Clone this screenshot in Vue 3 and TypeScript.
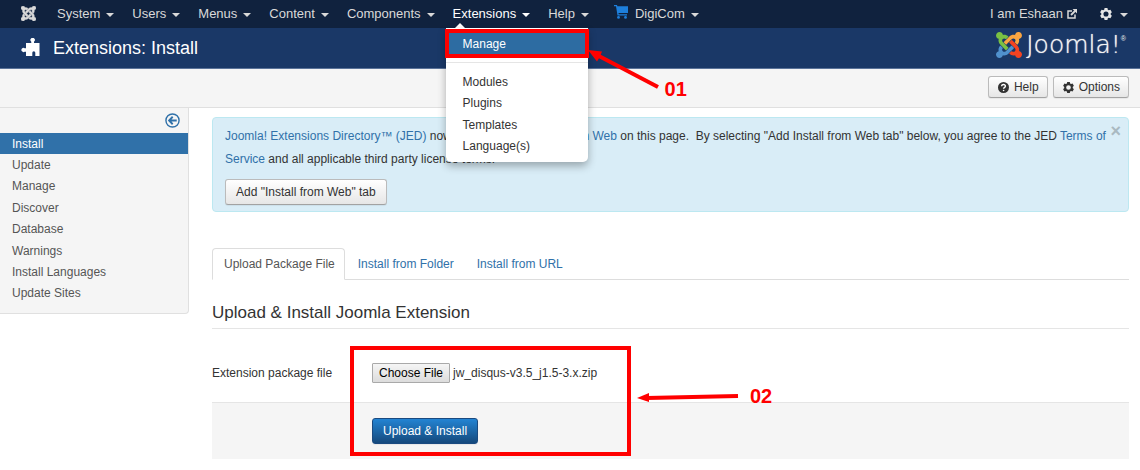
<script setup lang="ts">
import { onMounted, ref } from 'vue'

interface MenuEntry {
  label: string
  open?: boolean
}

const menus: MenuEntry[] = [
  { label: 'System' },
  { label: 'Users' },
  { label: 'Menus' },
  { label: 'Content' },
  { label: 'Components' },
  { label: 'Extensions', open: true },
  { label: 'Help' },
]
const extensionLinks: string[] = ['Modules', 'Plugins', 'Templates', 'Language(s)']
const sections: string[] = [
  'Install',
  'Update',
  'Manage',
  'Discover',
  'Database',
  'Warnings',
  'Install Languages',
  'Update Sites',
]
const tabs: string[] = ['Upload Package File', 'Install from Folder', 'Install from URL']

const logoParts: { name: string; d: string }[] = [
  {
    name: 'green',
    d: 'M.6 92.1C.6 58.8 27.4 32 60.4 32c30 0 54.5 21.9 59.2 50.2 32.6-7.6 67.1.6 96.5 30l-44.3 44.3c-20.5-20.5-42.6-16.3-55.4-3.5-14.3 14.3-14.3 37.9 0 52.2l99.5 99.5-44 44.3c-87.7-87.2-49.7-49.7-99.8-99.7-26.8-26.5-35-64.8-24.8-98.9C20.4 144.6.6 120.7.6 92.1z',
  },
  {
    name: 'orange',
    d: 'M130.1 208.5l44.3 44.3c10-10 89.7-89.7 99.7-99.8 14.3-14.3 37.6-14.3 51.9 0 12.8 12.8 17 35-3.5 55.4l44 44.3c31.2-31.2 38.5-67.6 28.9-101.2 29.2-4.1 51.9-29.2 51.9-59.5 0-33.2-26.8-60.1-59.8-60.1-30.3 0-55.4 22.5-59.5 51.6-33.8-9.9-71.7-1.5-98.3 25.1-18.3 19.1-71.1 71.5-99.6 99.9z',
  },
  {
    name: 'red',
    d: 'M396.4 360.7c8.2-32.7-.9-68.5-26.3-93.9-11.8-12.2 5 4.7-99.5-99.7l-44.3 44.3 99.7 99.7c14.3 14.3 14.3 37.6 0 51.9-12.8 12.8-35 17-55.4-3.5l-44 44.3c27.6 30.2 68 38.8 102.7 28 5.5 27.4 29.7 48.1 58.9 48.1 33 0 59.8-26.8 59.8-60.1 0-30.2-22.5-55-51.6-59.1z',
  },
  {
    name: 'blue',
    d: 'M312.1 307.6l-44-44.3c-87 86.4-50.4 50.4-99.7 99.8-14.3 14.3-37.6 14.3-51.9 0-13.1-13.4-16.9-35.3 3.2-55.4l-44-44.3c-30.2 30.2-38 65.2-29.5 98.3-26.7 6-46.2 29.9-46.2 58.2C0 453.2 26.8 480 59.8 480c28.6 0 52.5-19.8 58.6-46.7 32.7 8.2 68.5-.6 94.2-26 32.1-32 12.2-12.4 99.5-99.7z',
  },
]

const gearPath =
  'M6.1 0h3.8l.5 2.2 1.3.8 2.2-.7 1.9 3.3-1.6 1.6v1.6l1.6 1.6-1.9 3.3-2.2-.7-1.3.8-.5 2.2H6.1l-.5-2.2-1.3-.8-2.2.7L.2 10.4l1.6-1.6V7.2L.2 5.6l1.9-3.3 2.2.7 1.3-.8zM8 4.6a3.4 3.4 0 1 0 0 6.8 3.4 3.4 0 0 0 0-6.8z'

const packageInput = ref<HTMLInputElement | null>(null)

onMounted(() => {
  const transfer = new DataTransfer()
  transfer.items.add(new File([''], 'jw_disqus-v3.5_j1.5-3.x.zip'))
  if (packageInput.value) packageInput.value.files = transfer.files
})
</script>

<template>
  <div class="page">
    <nav class="topbar" aria-label="Main menu">
      <a class="brand" href="#" aria-label="Home">
        <svg viewBox="0 32 448 448" width="15" height="15">
          <path v-for="part in logoParts" :key="part.name" :d="part.d" fill="#d9d9d9" stroke="#d9d9d9" stroke-width="12" />
        </svg>
      </a>
      <ul class="menus">
        <li v-for="menu in menus" :key="menu.label" class="menu">
          <a class="menu-link" :class="{ open: menu.open }" href="#">{{ menu.label }}<span class="caret"></span></a>
          <div v-if="menu.open" class="dropdown">
            <a class="drop-link selected" href="#">Manage</a>
            <hr />
            <div class="drop-list">
              <a v-for="link in extensionLinks" :key="link" class="drop-link" href="#">{{ link }}</a>
            </div>
            <div class="mark mark-menu"></div>
            <div class="pointer pointer-menu">
              <svg width="72" height="50" viewBox="0 0 72 50">
                <path d="M9 6 70 38" stroke="#f00" stroke-width="4" />
                <path d="M0 1 14 2.500 12 7.500 9 12.500z" fill="#f00" />
              </svg>
              <span>01</span>
            </div>
          </div>
        </li>
        <li class="menu">
          <a class="menu-link" href="#">
            <svg class="cart" viewBox="0 0 15 14" width="15" height="14" fill="#1d7fdc">
              <path d="M0 0h3l.4 1.300H14V8H4.500l.2 1.200H13v1.200H3.500L2 1.200H0z" />
              <circle cx="4.500" cy="12.400" r="1.400" />
              <circle cx="11.500" cy="12.400" r="1.400" />
            </svg>DigiCom<span class="caret"></span>
          </a>
        </li>
      </ul>
      <div class="account">
        <a class="menu-link" href="#">I am Eshaan
          <svg class="external" viewBox="0 0 10 10" width="10" height="10" fill="none" stroke="#d9d9d9">
            <path d="M5 2H1v7h7V5.500" stroke-width="1.500" />
            <path d="M4 6 8.500 1.500" stroke-width="1.800" />
            <path d="M5.500 0H10v4.500z" fill="#d9d9d9" stroke="none" />
          </svg>
        </a>
        <a class="menu-link gear" href="#" aria-label="Settings">
          <svg viewBox="0 0 16 16" width="12" height="12"><path :d="gearPath" fill="#e6e6e6" fill-rule="evenodd" /></svg>
          <span class="caret"></span>
        </a>
      </div>
    </nav>

    <header class="header">
      <svg class="puzzle" viewBox="0 0 19 19" width="19" height="19" fill="#fff">
        <path d="M5 5h5.300V3.700a2.200 2.200 0 1 1 2.700 0V5h5.500v13h-4.200v-3.300a1.500 1.500 0 1 0-3 0V18H5v-4.300H3.700a2.100 2.100 0 1 1 0-3.500H5z" />
      </svg>
      <h1>Extensions: Install</h1>
      <a class="logo" href="#">
        <svg viewBox="0 32 448 448" width="26" height="26">
          <path v-for="part in logoParts" :key="part.name" :d="part.d" :class="part.name" />
        </svg>
        <span class="wordmark">Joomla!</span><sup>®</sup>
      </a>
    </header>

    <div class="toolbar">
      <button type="button" class="btn small">
        <svg viewBox="0 0 12 12" width="11" height="11">
          <circle cx="6" cy="6" r="6" fill="#333" />
          <path d="M4 4.600C4 2 8.200 2.200 8.100 4.500 8 5.900 6.100 5.800 6.100 7.400" fill="none" stroke="#fff" stroke-width="1.500" />
          <circle cx="6.100" cy="9.300" r=".9" fill="#fff" />
        </svg>Help
      </button>
      <button type="button" class="btn small">
        <svg viewBox="0 0 16 16" width="11" height="11"><path :d="gearPath" fill="#333" fill-rule="evenodd" /></svg>Options
      </button>
    </div>

    <div class="columns">
      <aside class="sidebar">
        <button type="button" class="collapse" aria-label="Hide the sidebar">
          <svg viewBox="0 0 16 16" width="15" height="15" fill="none" stroke="#3071a9">
            <circle cx="8" cy="8" r="7" stroke-width="1.500" />
            <path d="M12.500 8H5M8.200 4 4.400 8l3.800 4" stroke-width="2" />
          </svg>
        </button>
        <nav class="sections" aria-label="Extension manager">
          <a v-for="(section, i) in sections" :key="section" :class="{ current: i === 0 }" href="#">{{ section }}</a>
        </nav>
      </aside>

      <main class="content">
        <section class="alert">
          <button type="button" class="close" aria-label="Close">×</button>
          <p>
            <a href="#">Joomla! Extensions Directory™ (JED)</a> now available with <a href="#">Install from Web</a> on this page.&nbsp; By selecting "Add Install from Web tab" below, you agree to the JED <a href="#">Terms of Service</a> and all applicable third party license terms.
          </p>
          <button type="button" class="btn">Add "Install from Web" tab</button>
        </section>

        <nav class="tabs" aria-label="Install methods">
          <a v-for="(tab, i) in tabs" :key="tab" :class="{ current: i === 0 }" href="#">{{ tab }}</a>
        </nav>

        <form class="upload" @submit.prevent>
          <h2>Upload &amp; Install Joomla Extension</h2>
          <div class="field">
            <label for="package">Extension package file</label>
            <input id="package" ref="packageInput" type="file" />
          </div>
          <div class="actions">
            <button type="submit" class="btn primary">Upload &amp; Install</button>
          </div>
          <div class="mark mark-form"></div>
          <div class="pointer pointer-form">
            <svg width="102" height="12" viewBox="0 0 102 12">
              <path d="M10 8 101 6" stroke="#f00" stroke-width="4" />
              <path d="M0 8 12 3v9z" fill="#f00" />
            </svg>
            <span>02</span>
          </div>
        </form>
      </main>
    </div>
  </div>
</template>

<style>
body {
  margin: 0;
  background: #fff;
}
</style>

<style scoped>
.page {
  font: 12px/18px "Liberation Sans", Arial, sans-serif;
  color: #333;
}
* {
  box-sizing: border-box;
}
a {
  color: #3071a9;
  text-decoration: none;
}
svg {
  flex: none;
  display: block;
}
button,
input {
  font: inherit;
}

.topbar {
  display: flex;
  align-items: center;
  height: 28px;
  padding: 0 12px 0 21px;
  background: #10223e;
  font-size: 13px;
}
.brand {
  width: 36px;
  padding-bottom: 2px;
}
.menus {
  display: flex;
  gap: 18px;
  margin: 0;
  padding: 0;
  list-style: none;
}
.menu {
  position: relative;
}
.menu-link {
  display: flex;
  align-items: center;
  height: 28px;
  color: #d9d9d9;
  white-space: nowrap;
}
.menu-link.open {
  color: #fff;
}
.menu-link.open::after {
  content: "";
  position: absolute;
  left: 2px;
  bottom: 0;
  border: 5px solid transparent;
  border-top: 0;
  border-bottom-color: #fff;
}
.caret {
  margin: 2px 0 0 6px;
  border: 4px solid transparent;
  border-top-color: currentColor;
  border-bottom: 0;
  width: 7px;
}
.gear .caret {
  margin-left: 8px;
}
.cart {
  margin: 0 6px 4px 7px;
}
.account {
  display: flex;
  gap: 23px;
  margin-left: auto;
}
.external {
  margin-left: 4px;
}

.dropdown {
  position: absolute;
  z-index: 5;
  top: 28px;
  left: -7px;
  width: 142px;
  padding: 5px 0;
  background: #fff;
  border-radius: 0 0 5px 5px;
  box-shadow: 0 4px 9px rgba(0, 0, 0, 0.3);
  font-size: 12px;
}
.drop-link {
  display: flex;
  align-items: center;
  padding: 0 17px;
  color: #333;
}
.drop-link.selected {
  height: 22px;
  background: #2d6ca2;
  color: #fff;
}
.dropdown hr {
  margin: 7px 0 8px;
  border: 0;
  border-top: 1px solid #e5e5e5;
}
.drop-list,
.sections {
  display: grid;
  grid-auto-rows: 1fr;
}
.drop-list {
  min-height: 86px;
}

.mark {
  position: absolute;
  border: 4px solid #f00;
  pointer-events: none;
}
.mark-menu {
  top: 1px;
  left: -1px;
  right: -1px;
  height: 29px;
}
.pointer {
  position: absolute;
  display: flex;
  color: #f00;
  font-size: 20px;
  line-height: 20px;
  font-weight: bold;
}
.pointer-menu {
  top: 21px;
  left: 142px;
  align-items: flex-end;
  gap: 5px;
}

.header {
  display: flex;
  align-items: center;
  height: 41px;
  padding: 0 14px 0 21px;
  background: #1a3867;
  border-bottom: 1px solid #5b7399;
  color: #fff;
}
.puzzle {
  margin: 0 13px 2px 0;
}
.header h1 {
  margin: 0;
  font-size: 18px;
  line-height: 24px;
  font-weight: normal;
}
.logo {
  display: flex;
  align-items: center;
  margin-left: auto;
  padding-bottom: 7px;
  color: #f2f2f2;
}
.wordmark {
  margin-left: 4px;
  font: 200 25px/26px "DejaVu Sans", sans-serif;
  text-shadow: 0 0 1px #f2f2f2;
}
.logo sup {
  align-self: flex-start;
  font-size: 7px;
  line-height: 14px;
}
.green {
  fill: #7ac143;
}
.orange {
  fill: #f9a541;
}
.red {
  fill: #f44321;
}
.blue {
  fill: #5091cd;
}

.toolbar {
  display: flex;
  justify-content: flex-end;
  gap: 5px;
  padding: 7px 11px 9px;
  background: #f5f5f5;
  border-bottom: 1px solid #e0e0e0;
}
.btn {
  display: inline-flex;
  align-items: center;
  height: 26px;
  padding: 0 11px;
  border: 1px solid #bbb;
  border-bottom-color: #a2a2a2;
  border-radius: 3px;
  background: linear-gradient(#fff, #e6e6e6);
  box-shadow: 0 1px 1px rgba(0, 0, 0, 0.06);
  color: #333;
}
.btn.small {
  height: 22px;
  padding: 0 8px 0 9px;
}
.btn.small svg {
  margin-right: 5px;
}
.btn.primary {
  padding: 0 10px;
  border-color: #1a4a80;
  background: linear-gradient(#2384d3, #15497c);
  color: #fff;
}

.columns {
  display: flex;
  align-items: flex-start;
}
.sidebar {
  flex: none;
  width: 189px;
  padding-bottom: 9px;
  background: #f5f5f5;
  border: solid #e0e0e0;
  border-width: 0 1px 1px 0;
  border-radius: 0 0 4px 0;
}
.collapse {
  display: block;
  margin-left: auto;
  padding: 5px 8px;
  border: 0;
  background: none;
}
.sections {
  min-height: 171px;
}
.sections a {
  display: flex;
  align-items: center;
  padding-left: 12px;
  color: #555;
}
.sections a.current {
  background: #3071a9;
  color: #fff;
}

.content {
  flex: 1;
  min-width: 0;
  padding: 9px 11px 0 23px;
}
.alert {
  position: relative;
  padding: 7px 20px 6px 12px;
  border: 1px solid #bce8f1;
  border-radius: 4px;
  background: #d9edf7;
}
.alert p {
  margin: 0 0 8px;
  line-height: 23px;
}
.alert .btn {
  display: flex;
  padding: 0 10px;
}
.close {
  position: absolute;
  top: 4px;
  right: 7px;
  padding: 0;
  border: 0;
  background: none;
  color: #a9b9c1;
  font-size: 18px;
  line-height: 18px;
  font-weight: bold;
}

.tabs {
  display: flex;
  gap: 1px;
  margin-top: 36px;
  border-bottom: 1px solid #ddd;
}
.tabs a {
  height: 31px;
  margin-bottom: -1px;
  padding: 0 9px 0 11px;
  border: 1px solid transparent;
  line-height: 30px;
}
.tabs a.current {
  height: 32px;
  border-color: #ddd;
  border-bottom-color: #fff;
  border-radius: 4px 4px 0 0;
  background: #fff;
  color: #555;
}

.upload {
  position: relative;
}
.upload h2 {
  margin: 22px 0 0;
  padding-bottom: 4px;
  border-bottom: 1px solid #e5e5e5;
  font-size: 17px;
  line-height: 22px;
  font-weight: normal;
}
.field {
  display: flex;
  align-items: center;
  height: 73px;
  padding-top: 15px;
}
.field label {
  width: 160px;
}
.field input {
  width: 320px;
  color: #333;
}
.field input::file-selector-button {
  height: 20px;
  margin-right: 3px;
  padding: 0 6px;
  border: 1px solid #a9a9a9;
  border-radius: 1px;
  background: linear-gradient(#f5f5f5, #dcdcdc);
  color: #000;
  font: 12px/16px "Liberation Sans", Arial, sans-serif;
}
.actions {
  padding: 15px 0 15px 160px;
  border-top: 1px solid #e5e5e5;
  background: #f5f5f5;
}
.mark-form {
  top: 44px;
  left: 138px;
  width: 281px;
  height: 110px;
}
.pointer-form {
  top: 84px;
  left: 425px;
  align-items: center;
  gap: 11px;
}
</style>
